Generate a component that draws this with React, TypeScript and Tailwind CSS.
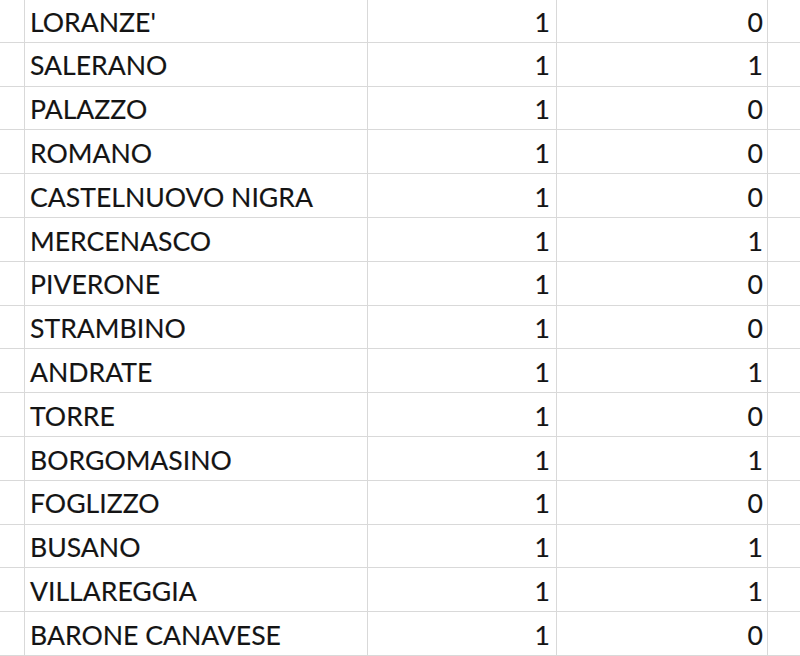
import React from "react";

const rows: [string, number, number][] = [
  ["LORANZE'", 1, 0],
  ["SALERANO", 1, 1],
  ["PALAZZO", 1, 0],
  ["ROMANO", 1, 0],
  ["CASTELNUOVO NIGRA", 1, 0],
  ["MERCENASCO", 1, 1],
  ["PIVERONE", 1, 0],
  ["STRAMBINO", 1, 0],
  ["ANDRATE", 1, 1],
  ["TORRE", 1, 0],
  ["BORGOMASINO", 1, 1],
  ["FOGLIZZO", 1, 0],
  ["BUSANO", 1, 1],
  ["VILLAREGGIA", 1, 1],
  ["BARONE CANAVESE", 1, 0],
];

export default function App() {
  return (
    <div className="w-[800px] h-[656px] overflow-hidden bg-white text-[#141414] [-webkit-text-stroke:0.15px_#141414]" style={{ fontFamily: "Lato, 'Open Sans', sans-serif" }}>
      <div className="-mt-[1px]">
        {rows.map(([name, a, b], i) => (
          <div key={i} className="grid grid-cols-[25px_343px_189px_211px_32px] h-[43.8px] border-b border-[#d9d9d9]">
            <div className="border-r border-[#d9d9d9]" />
            <div className="border-r border-[#d9d9d9] flex items-center pl-[5px] text-[26.6px] leading-none pt-[3px]">{name}</div>
            <div className="border-r border-[#d9d9d9] flex items-center justify-end pr-[6px] text-[26.6px] leading-none pt-[3px]">{a}</div>
            <div className="border-r border-[#d9d9d9] flex items-center justify-end pr-[4px] text-[26.6px] leading-none pt-[3px]">{b}</div>
            <div />
          </div>
        ))}
      </div>
    </div>
  );
}
